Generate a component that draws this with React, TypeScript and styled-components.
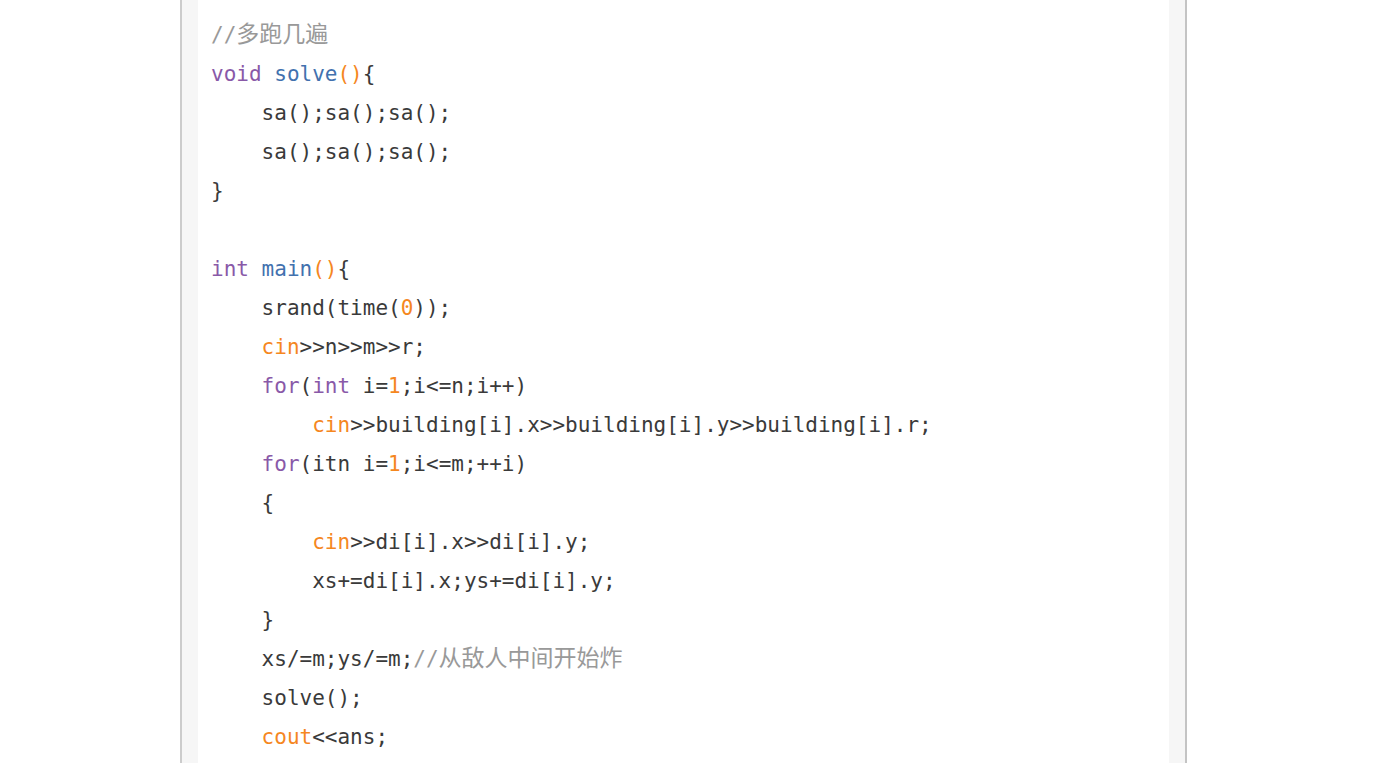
import React from "react";
import styled, { createGlobalStyle } from "styled-components";

const Global = createGlobalStyle`
  html, body { margin: 0; padding: 0; background: #ffffff; overflow: hidden; height: 100%; }
  #root { height: 100%; }
`;

const Page = styled.div`
  height: 763px;
  overflow: hidden;
  background: #ffffff;
  display: flex;
`;

const Frame = styled.div`
  margin-left: 180px;
  width: 971px;
  border-left: 2px solid #cccccc;
  border-right: 2px solid #c4c4c4;
  background: #f6f6f6;
  padding: 0 16px;
  box-sizing: content-box;
  display: flex;
  flex-direction: column;
`;

const CodeBlock = styled.pre`
  margin: 0;
  flex: 1;
  background: #ffffff;
  padding: 16px 13px;
  font-family: "DejaVu Sans Mono", "Noto Sans CJK SC", monospace;
  font-size: 21px;
  line-height: 39px;
  color: #3a3a3a;
  white-space: pre;
  overflow: hidden;
`;

const Line = styled.div<{ $indent?: number }>`
  height: 39px;
  padding-left: ${(p) => (p.$indent ?? 0) * 50.6}px;
`;

const colors: Record<string, string> = {
  kw: "#8959a8",
  fn: "#4271ae",
  num: "#f5871f",
};

const Tok = styled.span<{ $k: string }>`
  color: ${(p) => colors[p.$k]};
`;

const Cm = styled.span`
  color: #999999;
`;

const Cjk = styled.span`
  font-family: "Noto Sans CJK SC", sans-serif;
  font-size: 23px;
  line-height: 0;
`;

type Part = string | [string, string] | [string, string, string];
const lines: { i: number; p: Part[] }[] = [
  { i: 0, p: [["cm", "//", "多跑几遍"]] },
  { i: 0, p: [["kw", "void"], " ", ["fn", "solve"], ["num", "()"], "{"] },
  { i: 1, p: ["sa();sa();sa();"] },
  { i: 1, p: ["sa();sa();sa();"] },
  { i: 0, p: ["}"] },
  { i: 0, p: [""] },
  { i: 0, p: [["kw", "int"], " ", ["fn", "main"], ["num", "()"], "{"] },
  { i: 1, p: ["srand(time(", ["num", "0"], "));"] },
  { i: 1, p: [["num", "cin"], ">>n>>m>>r;"] },
  { i: 1, p: [["kw", "for"], "(", ["kw", "int"], " i=", ["num", "1"], ";i<=n;i++)"] },
  { i: 2, p: [["num", "cin"], ">>building[i].x>>building[i].y>>building[i].r;"] },
  { i: 1, p: [["kw", "for"], "(itn i=", ["num", "1"], ";i<=m;++i)"] },
  { i: 1, p: ["{"] },
  { i: 2, p: [["num", "cin"], ">>di[i].x>>di[i].y;"] },
  { i: 2, p: ["xs+=di[i].x;ys+=di[i].y;"] },
  { i: 1, p: ["}"] },
  { i: 1, p: ["xs/=m;ys/=m;", ["cm", "//", "从敌人中间开始炸"]] },
  { i: 1, p: ["solve();"] },
  { i: 1, p: [["num", "cout"], "<<ans;"] },
];

export default function App() {
  return (
    <>
      <Global />
      <Page>
        <Frame>
          <CodeBlock>
            {lines.map((l, idx) => (
              <Line key={idx} $indent={l.i}>
                {l.p.map((t, j) =>
                  typeof t === "string" ? (
                    <React.Fragment key={j}>{t}</React.Fragment>
                  ) : t[0] === "cm" ? (
                    <Cm key={j}>
                      {t[1]}
                      <Cjk>{t[2]}</Cjk>
                    </Cm>
                  ) : (
                    <Tok key={j} $k={t[0]}>
                      {t[1]}
                    </Tok>
                  )
                )}
              </Line>
            ))}
          </CodeBlock>
        </Frame>
      </Page>
    </>
  );
}
